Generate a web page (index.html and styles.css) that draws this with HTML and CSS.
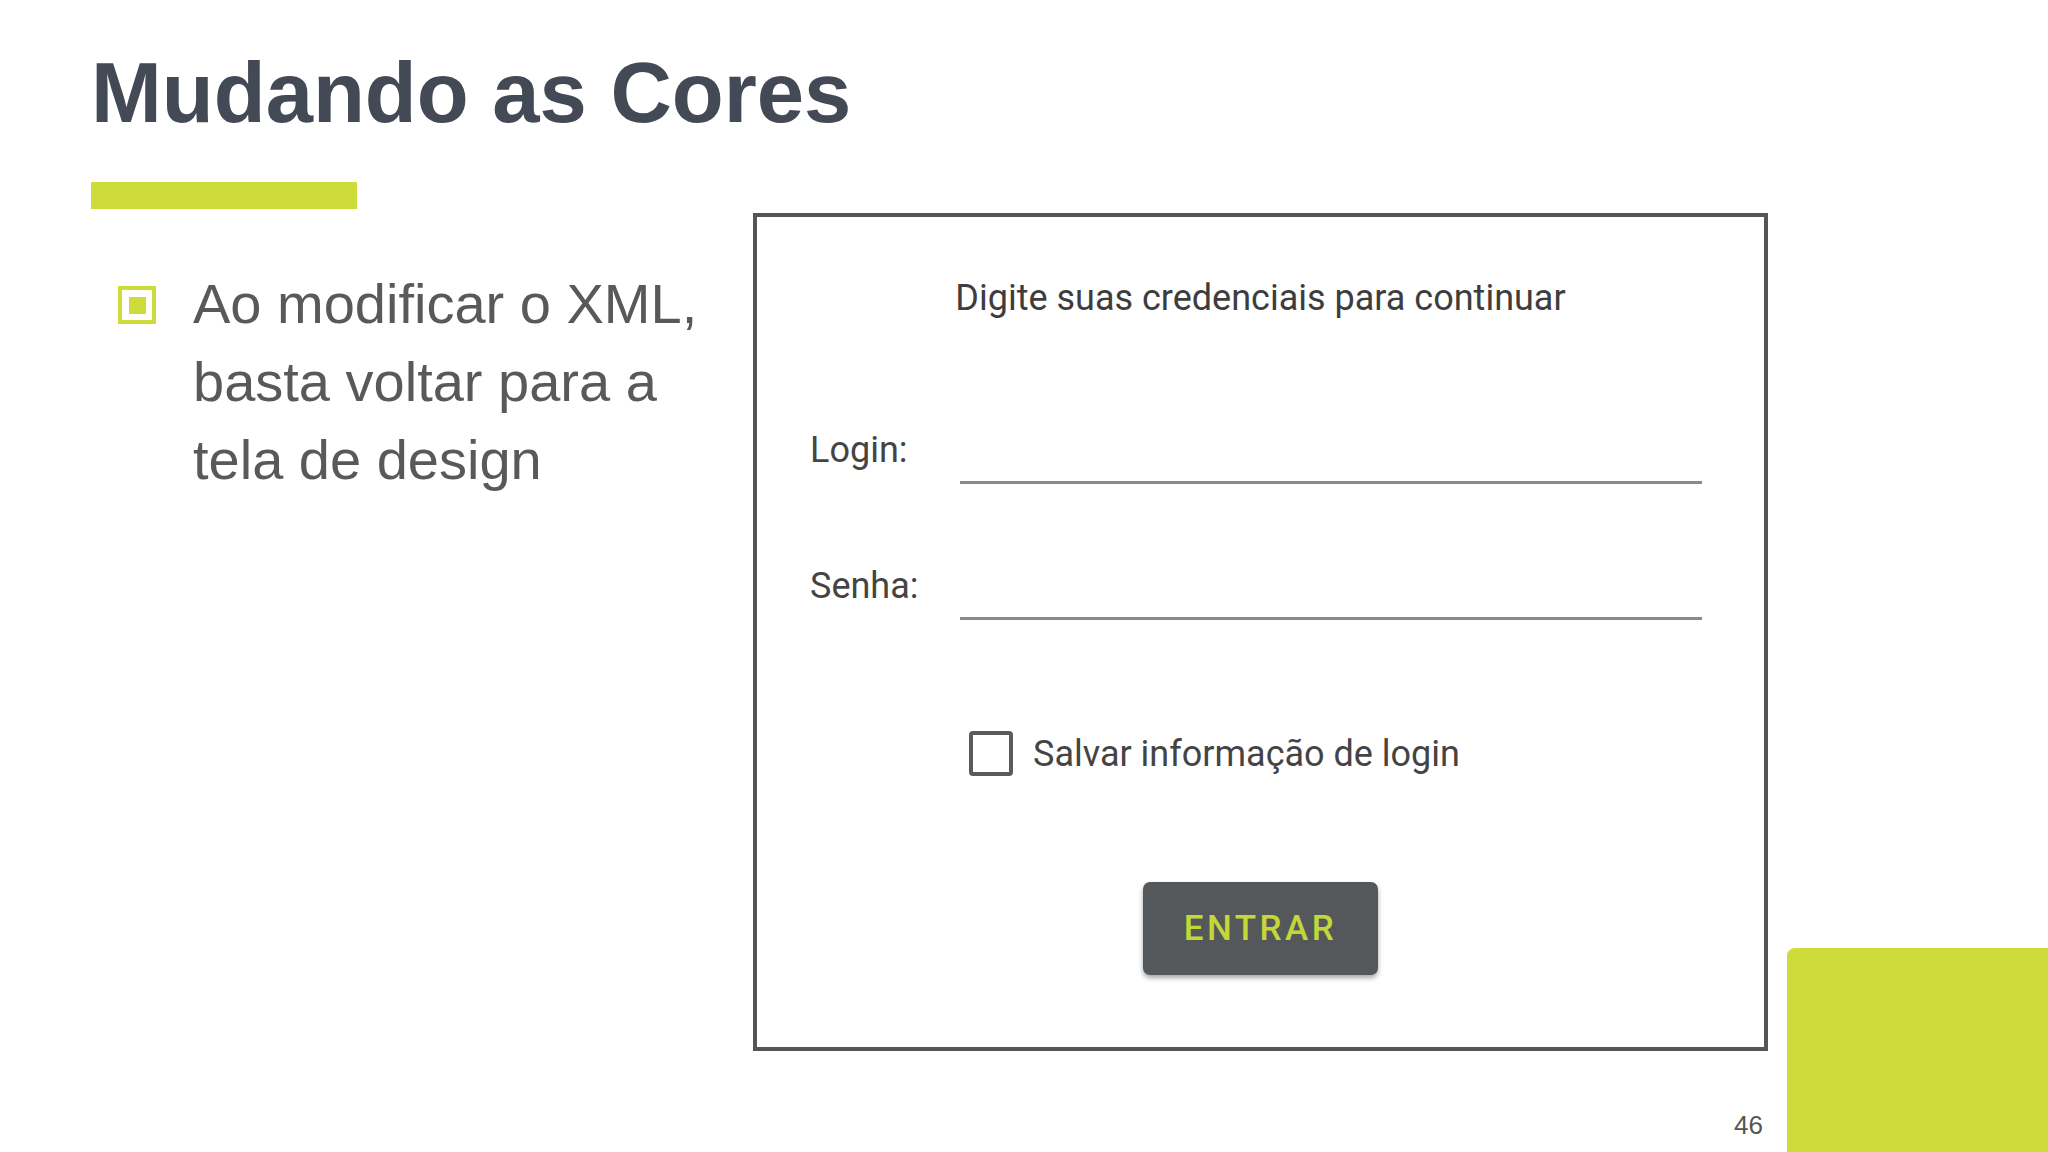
FILE: index.html
```html
<!DOCTYPE html>
<html lang="pt-BR">
<head>
    <meta charset="UTF-8">
    <meta name="viewport" content="width=device-width, initial-scale=1.0">
    <title>Mudando as Cores</title>
    <link rel="stylesheet" href="styles.css">
</head>
<body>
    <div class="slide">
        <h1 class="slide-title">Mudando as Cores</h1>
        <div class="title-bar"></div>

        <div class="content">
            <ul class="bullets">
                <li class="bullet-item">
                    <span class="bullet"></span>
                    <span class="bullet-text">Ao modificar o XML, basta voltar para a tela de design</span>
                </li>
            </ul>

            <!-- print of the app screen -->
            <div class="phone-shot">
                <p class="shot-heading">Digite suas credenciais para continuar</p>

                <div class="field-row">
                    <span class="field-label">Login:</span>
                    <span class="field-input"></span>
                </div>

                <div class="field-row senha">
                    <span class="field-label">Senha:</span>
                    <span class="field-input"></span>
                </div>

                <div class="check-row">
                    <span class="check-box"></span>
                    <span class="check-label">Salvar informação de login</span>
                </div>

                <div class="button-row">
                    <button class="enter-button">ENTRAR</button>
                </div>
            </div>
        </div>

        <div class="corner"></div>
        <div class="page-number">46</div>
    </div>
</body>
</html>
```

FILE: styles.css
```css
body {
    margin: 0;
    background-color: #fff;
    font-family: "Liberation Sans", Arial, sans-serif;
}

.slide {
    position: relative;
    width: 2048px;
    height: 1152px;
    padding: 50px 0 0 91px;
    box-sizing: border-box;
    overflow: hidden;
    background-color: #fff;
}

.slide-title {
    margin: 0;
    font-size: 85px;
    line-height: 86px;
    font-weight: bold;
    color: #434a55;
}

.title-bar {
    margin-top: 46px;
    width: 266px;
    height: 27px;
    background-color: #cddc3b;
}

.content {
    display: flex;
    margin-top: 4px;
}

.bullets {
    list-style: none;
    margin: 0;
    padding: 52px 0 0 27px;
    width: 662px;
    box-sizing: border-box;
}

.bullet-item {
    display: flex;
    gap: 37px;
}

.bullet {
    flex: none;
    width: 38px;
    height: 38px;
    margin-top: 21px;
    border: 4px solid #cddc3b;
    box-sizing: border-box;
    display: flex;
    align-items: center;
    justify-content: center;
}

.bullet::after {
    content: "";
    width: 17px;
    height: 17px;
    background-color: #cddc3b;
}

.bullet-text {
    width: 540px;
    font-size: 56px;
    line-height: 78px;
    color: #595959;
}

.phone-shot {
    width: 1015px;
    height: 838px;
    border: 4px solid #555;
    box-sizing: border-box;
    padding: 60px 62px 0 53px;
    font-family: Roboto, "Noto Sans", sans-serif;
    font-size: 36px;
    line-height: 42px;
    color: #3d3d3d;
}

.shot-heading {
    margin: 0;
    text-align: center;
    padding-left: 9px;
}

.field-row {
    display: flex;
    height: 55px;
    margin-top: 110px;
}

.field-row.senha {
    margin-top: 81px;
}

.field-label {
    width: 150px;
    color: #444;
}

.field-input {
    flex: 1;
    border-bottom: 3px solid #8a8a8a;
}

.check-row {
    display: flex;
    align-items: center;
    gap: 20px;
    margin-top: 111px;
    padding-left: 159px;
}

.check-box {
    width: 44px;
    height: 45px;
    border: 4px solid #5a5a5a;
    border-radius: 4px;
    box-sizing: border-box;
}

.check-label {
    color: #444;
}

.button-row {
    display: flex;
    justify-content: center;
    margin-top: 106px;
    padding-left: 9px;
}

.enter-button {
    width: 235px;
    height: 93px;
    border: none;
    border-radius: 7px;
    background-color: #55585a;
    box-shadow: 0 3px 5px rgba(0, 0, 0, 0.35);
    font-family: Roboto, "Noto Sans", sans-serif;
    font-size: 35px;
    font-weight: 500;
    letter-spacing: 3.5px;
    color: #c3d73a;
}

.corner {
    position: absolute;
    left: 1787px;
    top: 948px;
    right: 0;
    bottom: 0;
    background-color: #cddc3b;
    border-top-left-radius: 8px;
}

.page-number {
    position: absolute;
    right: 285px;
    top: 1110px;
    font-size: 26px;
    line-height: 30px;
    color: #555;
}
```
